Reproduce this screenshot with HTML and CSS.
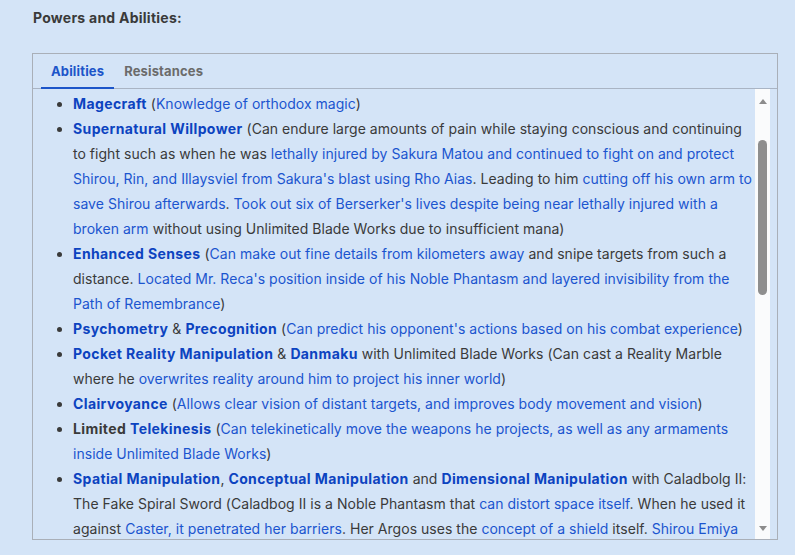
FILE: index.html
```html
<!DOCTYPE html>
<html lang="en">
<head>
    <meta charset="UTF-8">
    <meta name="viewport" content="width=device-width, initial-scale=1.0">
    <title>Powers and Abilities</title>
    <link rel="stylesheet" href="styles.css">
</head>
<body>

    <h3 class="section-title">Powers and Abilities:</h3>

    <div class="tabber">
        <div class="tabs">
            <span class="tab active">Abilities</span>
            <span class="tab">Resistances</span>
        </div>

        <div class="panel">
            <div class="panel-body">
                <ul>
                    <li><a class="key" href="#">Magecraft</a> (<a href="#">Knowledge of orthodox magic</a>)</li>
                    <li><a class="key" href="#">Supernatural Willpower</a> (Can endure large amounts of pain while staying conscious and continuing to fight such as when he was <a href="#">lethally injured by Sakura Matou and continued to fight on and protect Shirou, Rin, and Illaysviel from Sakura's blast using Rho Aias</a>. Leading to him <a href="#">cutting off his own arm to save Shirou afterwards</a>. <a href="#">Took out six of Berserker's lives despite being near lethally injured with a broken arm</a> without using Unlimited Blade Works due to insufficient mana)</li>
                    <li><a class="key" href="#">Enhanced Senses</a> (<a href="#">Can make out fine details from kilometers away</a> and snipe targets from such a distance. <a href="#">Located Mr. Reca's position inside of his Noble Phantasm and layered invisibility from the Path of Remembrance</a>)</li>
                    <li><a class="key" href="#">Psychometry</a> &amp; <a class="key" href="#">Precognition</a> (<a href="#">Can predict his opponent's actions based on his combat experience</a>)</li>
                    <li><a class="key" href="#">Pocket Reality Manipulation</a> &amp; <a class="key" href="#">Danmaku</a> with Unlimited Blade Works (Can cast a Reality Marble where he <a href="#">overwrites reality around him to project his inner world</a>)</li>
                    <li><a class="key" href="#">Clairvoyance</a> (<a href="#">Allows clear vision of distant targets, and improves body movement and vision</a>)</li>
                    <li><b>Limited</b> <a class="key" href="#">Telekinesis</a> (<a href="#">Can telekinetically move the weapons he projects, as well as any armaments inside Unlimited Blade Works</a>)</li>
                    <li><a class="key" href="#">Spatial Manipulation</a>, <a class="key" href="#">Conceptual Manipulation</a> and <a class="key" href="#">Dimensional Manipulation</a> with Caladbolg II: The Fake Spiral Sword (Caladbog II is a Noble Phantasm that <a href="#">can distort space itself</a>. When he used it against <a href="#">Caster, it penetrated her barriers</a>. Her Argos uses the <a href="#">concept of a shield</a> itself. <a href="#">Shirou Emiya was able to break through the shield with it</a>)</li>
                    <li><a class="key" href="#">Weapon Mastery</a> (<a href="#">Skilled with swords and bows</a>)</li>
                </ul>
            </div>
            <div class="scrollbar">
                <span class="arrow up"></span>
                <span class="thumb"></span>
                <span class="arrow down"></span>
            </div>
        </div>
    </div>

</body>
</html>
```

FILE: styles.css
```css
body {
    margin: 0;
    background-color: #d4e4f7;
    color: #3a3a3a;
    font-family: Inter, "Open Sans", Arial, sans-serif;
    font-size: 14px;
}
.section-title {
    margin: 0;
    padding: 8px 0 0 33px;
    font-size: 14px;
    line-height: 20px;
    font-weight: bold;
    letter-spacing: 0.25px;
}
.tabber {
    margin: 25px 17px 0 32px;
    border: 1px solid #a9afb8;
}
.tabs {
    display: flex;
    padding-left: 8px;
    border-bottom: 1px solid #a9b4c4;
}
.tab {
    padding: 1px 10px 0;
    line-height: 32px;
    font-size: 13px;
    font-weight: bold;
    letter-spacing: 0.15px;
    color: #6b6b6b;
    border-bottom: 2px solid transparent;
    margin-bottom: -1px;
}
.tab.active {
    color: #1d55c9;
    border-bottom-color: #1d55c9;
}

/* content + drawn scrollbar */
.panel {
    display: flex;
    height: 450px;
    margin-right: 7px;
}
.panel-body {
    flex: 1;
    overflow: hidden;
}
.scrollbar {
    width: 15px;
    background-color: #fafbfc;
    display: flex;
    flex-direction: column;
    align-items: center;
    padding: 10px 0 8px;
    box-sizing: border-box;
}
.arrow {
    width: 0;
    height: 0;
    border-left: 4px solid transparent;
    border-right: 4px solid transparent;
}
.arrow.up {
    border-bottom: 5px solid #8c8c8c;
}
.arrow.down {
    margin-top: auto;
    border-top: 5px solid #8c8c8c;
}
.thumb {
    margin-top: 36px;
    width: 9px;
    height: 155px;
    border-radius: 5px;
    background-color: #8e8e8e;
}

ul {
    margin: 0;
    padding: 2px 0 0 40px;
    line-height: 25px;
    letter-spacing: 0.03px;
}
a {
    color: #1b55cf;
    text-decoration: none;
}
a.key,
b {
    font-weight: bold;
    letter-spacing: 0.38px;
}
a.key {
    color: #0c43c0;
}
b {
    color: #3a3a3a;
}
```
